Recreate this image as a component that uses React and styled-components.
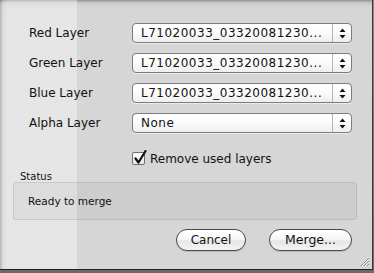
import React from "react";
import styled, { createGlobalStyle } from "styled-components";

const Global = createGlobalStyle`
  html, body { margin: 0; padding: 0; background: #6a6a6a; }
  body { font-family: "DejaVu Sans", "Liberation Sans", sans-serif; }
  * { box-sizing: border-box; }
`;

const Page = styled.div`
  width: 374px;
  height: 273px;
  background: linear-gradient(to bottom, #8a8a8a 0, #6a6a6a 100%);
  overflow: hidden;
`;

const Window = styled.div`
  position: relative;
  width: 373px;
  height: 270px;
  background: linear-gradient(to bottom, #8c8c8c 0, #a9a9a9 1px, #c8c8c8 3px, #d3d3d3 6px, #d6d6d6 12px, #d6d6d6 100%);
  border-right: 1px solid #3a3a3a;
  border-bottom: 1px solid #202020;
  color: #111;
`;

const Glare = styled.div`
  position: absolute;
  left: 0;
  top: 0;
  width: 77px;
  height: 100%;
  pointer-events: none;
  background: linear-gradient(to right, rgba(0,0,0,0.16) 0, rgba(255,255,255,0.2) 3px, rgba(255,255,255,0.38) 8px, rgba(255,255,255,0.38) 100%);
`;

const Content = styled.div`
  position: relative;
  display: flex;
  flex-direction: column;
  height: 100%;
`;

const Form = styled.div`
  display: grid;
  grid-template-columns: 103px 220px;
  grid-auto-rows: 20px;
  row-gap: 10px;
  margin-top: 23px;
  padding-left: 29px;
`;

const Label = styled.div`
  font-size: 12px;
  line-height: 20px;
  white-space: nowrap;
`;

const Popup = styled.div`
  display: flex;
  align-items: stretch;
  height: 20px;
  border: 1px solid #7d7d7d;
  border-radius: 4px;
  background: linear-gradient(to bottom, #ffffff 0, #fbfbfb 50%, #eeeeee 100%);
  box-shadow: 0 1px 0 rgba(255,255,255,0.5);
`;

const PopupValue = styled.div`
  flex: 1;
  padding-left: 8px;
  font-size: 12px;
  letter-spacing: 0.5px;
  line-height: 18px;
  white-space: nowrap;
  overflow: hidden;
`;

const PopupArrows = styled.div`
  width: 19px;
  border-left: 1px solid #b4b4b4;
  display: flex;
  align-items: center;
  justify-content: center;
`;

const CheckRow = styled.label`
  display: flex;
  align-items: center;
  gap: 5px;
  height: 13px;
  margin-top: 19px;
  padding-left: 132px;
  font-size: 12px;
`;

const CheckBox = styled.span`
  position: relative;
  width: 13px;
  height: 13px;
  border: 1px solid #6f6f6f;
  border-radius: 2px;
  background: linear-gradient(to bottom, #ffffff, #e9e9e9);
  flex: none;
`;

const CheckMark = styled.svg`
  position: absolute;
  left: 1px;
  top: -3px;
`;

const StatusLabel = styled.div`
  margin-top: 7px;
  padding-left: 20px;
  height: 10px;
  font-size: 10px;
  line-height: 10px;
`;

const StatusBox = styled.div`
  margin: 0 15px 0 13px;
  height: 38px;
  border: 1px solid rgba(0, 0, 0, 0.09);
  border-radius: 3px;
  background: rgba(0, 0, 0, 0.04);
  display: flex;
  align-items: center;
  padding-left: 14px;
  font-size: 10.5px;
`;

const ButtonRow = styled.div`
  display: flex;
  justify-content: flex-end;
  gap: 23px;
  margin-top: 9px;
  padding-right: 20px;
`;

const Button = styled.button`
  width: ${(p) => p.$w}px;
  height: 22px;
  border: 1px solid #4a4a4a;
  border-radius: 11px;
  background: linear-gradient(to bottom, #ffffff 0, #f7f7f7 45%, #e6e6e6 55%, #f4f4f4 100%);
  font-family: "DejaVu Sans", "Liberation Sans", sans-serif;
  font-size: ${(p) => p.$fs}px;
  color: #111;
  padding: 0;
  line-height: 20px;
  box-shadow: 0 1px 1px rgba(0,0,0,0.15);
`;

const Grip = styled.svg`
  position: absolute;
  right: 2px;
  bottom: 2px;
`;

const Arrows = () => (
  <svg width="7" height="11" viewBox="0 0 7 11">
    <path d="M3.5 0.5 L6.5 4 L0.5 4 Z" fill="#111" />
    <path d="M3.5 10.5 L6.5 7 L0.5 7 Z" fill="#111" />
  </svg>
);

const Select = ({ value }) => (
  <Popup>
    <PopupValue>{value}</PopupValue>
    <PopupArrows>
      <Arrows />
    </PopupArrows>
  </Popup>
);

const layers = [
  ["Red Layer", "L71020033_03320081230..."],
  ["Green Layer", "L71020033_03320081230..."],
  ["Blue Layer", "L71020033_03320081230..."],
  ["Alpha Layer", "None"],
];

export default function App() {
  return (
    <>
      <Global />
      <Page>
        <Window>
          <Glare />
          <Content>
            <Form>
              {layers.map(([l, v]) => (
                <React.Fragment key={l}>
                  <Label>{l}</Label>
                  <Select value={v} />
                </React.Fragment>
              ))}
            </Form>
            <CheckRow>
              <CheckBox>
                <CheckMark width="13" height="15" viewBox="0 0 13 15">
                  <path d="M1.5 8.5 L4.5 12.5 L11.5 1" stroke="#111" strokeWidth="2.2" fill="none" strokeLinecap="round" strokeLinejoin="round" />
                </CheckMark>
              </CheckBox>
              Remove used layers
            </CheckRow>
            <StatusLabel>Status</StatusLabel>
            <StatusBox>Ready to merge</StatusBox>
            <ButtonRow>
              <Button $w={70} $fs={12}>Cancel</Button>
              <Button $w={83} $fs={12.5}>Merge...</Button>
            </ButtonRow>
          </Content>
          <Grip width="12" height="12" viewBox="0 0 12 12">
            <path d="M11 3 L3 11 M11 6 L6 11 M11 9 L9 11" stroke="#8a8a8a" strokeWidth="1" />
            <path d="M11 4 L4 11 M11 7 L7 11 M11 10 L10 11" stroke="#f4f4f4" strokeWidth="1" />
          </Grip>
        </Window>
      </Page>
    </>
  );
}
